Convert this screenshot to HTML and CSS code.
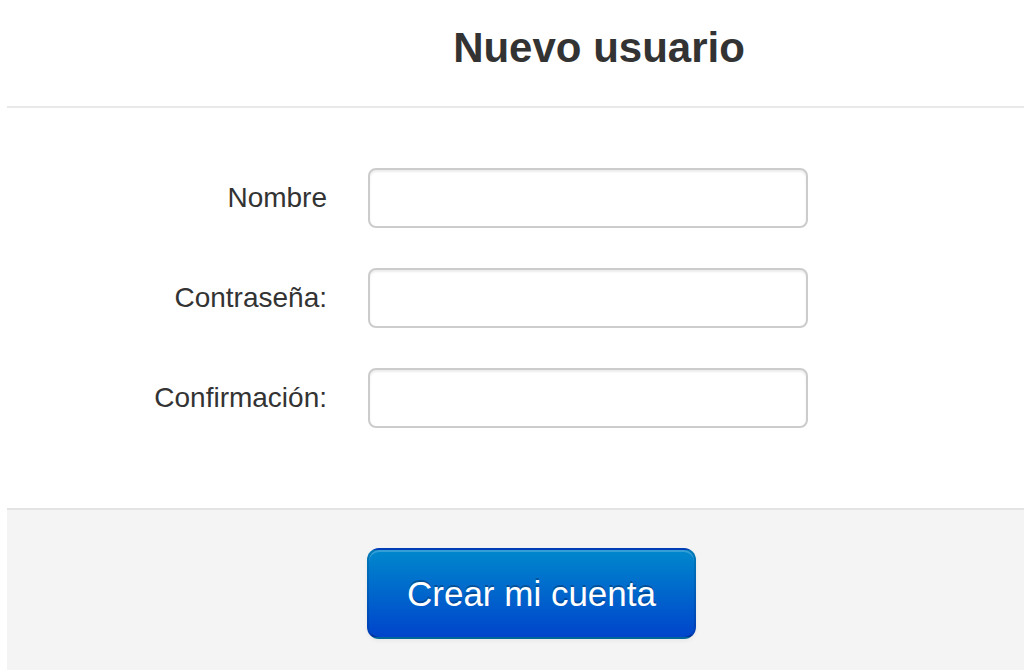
FILE: index.html
```html
<!DOCTYPE html>
<html lang="es">
<head>
<meta charset="utf-8">
<title>Nuevo usuario</title>
<link rel="stylesheet" href="styles.css">
</head>
<body>
<div class="panel">
  <div class="panel-header">
    <h3 class="title">Nuevo usuario</h3>
  </div>
  <form class="panel-body">
    <div class="row">
      <label class="label" for="nombre">Nombre</label>
      <input class="field" id="nombre" type="text">
    </div>
    <div class="row">
      <label class="label" for="pass">Contraseña:</label>
      <input class="field" id="pass" type="password">
    </div>
    <div class="row">
      <label class="label" for="conf">Confirmación:</label>
      <input class="field" id="conf" type="password">
    </div>
  </form>
  <div class="panel-footer">
    <button class="btn-primary" type="button">Crear mi cuenta</button>
  </div>
</div>
</body>
</html>
```

FILE: styles.css
```css
html, body {
  margin: 0;
  padding: 0;
  background: #ffffff;
  height: 100%;
  overflow: hidden;
}

body {
  font-family: "Liberation Sans", Arial, Helvetica, sans-serif;
  color: #333333;
}

.panel {
  margin-left: 7px;
  display: flex;
  flex-direction: column;
  min-height: 100%;
}

.panel-header {
  padding: 24px 0 34px 167px;
  border-bottom: 2px solid #e9e9e9;
  text-align: center;
}

.title {
  margin: 0;
  font-size: 42px;
  line-height: 48px;
  font-weight: bold;
  color: #333333;
}

.panel-body {
  margin: 0;
  padding: 60px 0 80px 41px;
  display: flex;
  flex-direction: column;
  gap: 40px;
}

.row {
  display: grid;
  grid-template-columns: 280px 440px;
  column-gap: 40px;
  align-items: center;
}

.label {
  text-align: right;
  font-size: 28px;
  line-height: 40px;
  color: #333333;
  padding-right: 1px;
}

.field {
  box-sizing: border-box;
  width: 440px;
  height: 60px;
  margin: 0;
  padding: 8px 12px;
  border: 2px solid #cccccc;
  border-radius: 8px;
  background: #ffffff;
  box-shadow: inset 0 2px 2px rgba(0, 0, 0, 0.075);
  font-family: inherit;
  font-size: 28px;
  outline: none;
}

.panel-footer {
  flex: 1;
  border-top: 2px solid #e3e3e3;
  background: #f4f4f4;
  padding: 38px 0 0 360px;
}

.btn-primary {
  box-sizing: border-box;
  height: 91px;
  padding: 0 38px;
  border: 2px solid rgba(0, 0, 0, 0.1);
  border-bottom-color: rgba(0, 0, 0, 0.25);
  border-radius: 12px;
  background-color: #006dcc;
  background-image: linear-gradient(to bottom, #0088cc, #0044cc);
  box-shadow: inset 0 2px 0 rgba(255, 255, 255, 0.2), 0 2px 4px rgba(0, 0, 0, 0.05);
  color: #ffffff;
  text-shadow: 0 -2px 0 rgba(0, 0, 0, 0.25);
  font-family: "Liberation Sans", Arial, Helvetica, sans-serif;
  font-size: 35px;
  line-height: 40px;
  cursor: pointer;
}
```
